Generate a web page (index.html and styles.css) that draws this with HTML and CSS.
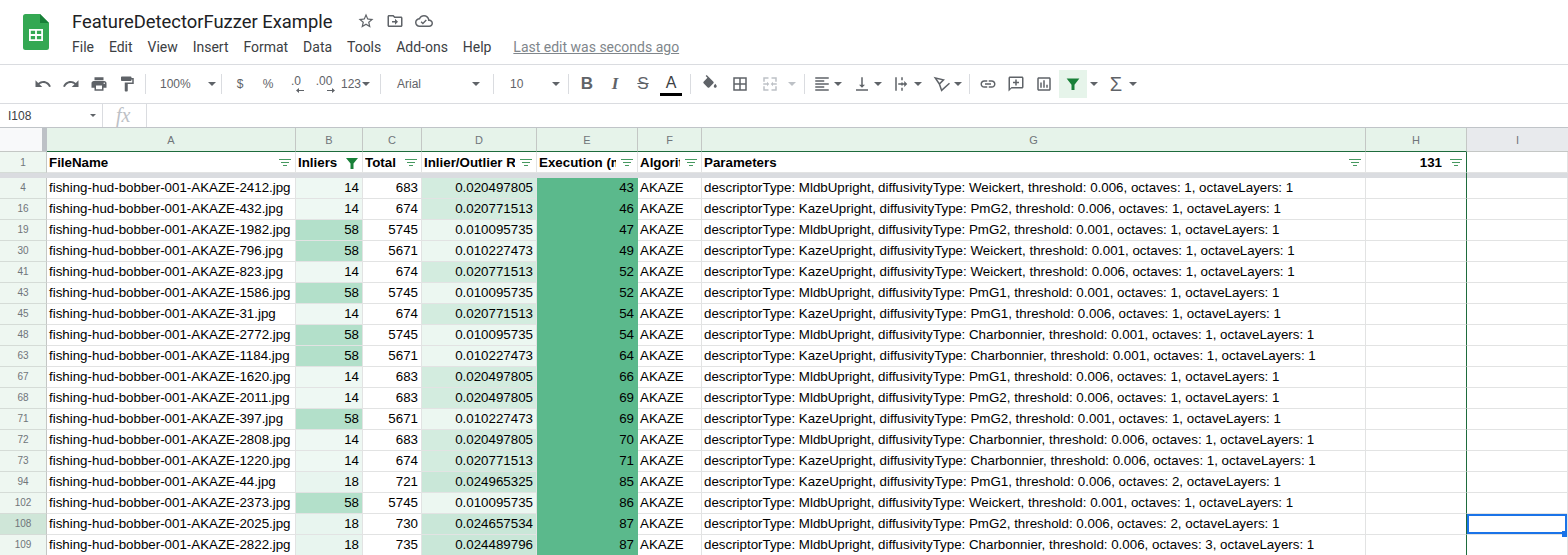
FILE: index.html
```html
<!DOCTYPE html>
<html lang="en">
<head>
    <meta charset="UTF-8">
    <title>FeatureDetectorFuzzer Example</title>
    <link rel="stylesheet" href="styles.css">
</head>
<body>
<header class="top">
    <svg class="logo" viewBox="0 0 26 36" width="26" height="36">
        <path fill="#34a853" d="M2.500 0H17l9 9v24.500a2.500 2.500 0 0 1-2.500 2.500h-21A2.500 2.500 0 0 1 0 33.500v-31A2.500 2.500 0 0 1 2.500 0z"/>
        <path fill="#188038" d="M17 0l9 9h-9z"/>
        <path fill="#fff" d="M6 15h14v12H6zm1.800 1.800v3.300h4.300v-3.300zm6.100 0v3.300h4.300v-3.300zm-6.100 5.100v3.300h4.300v-3.300zm6.100 0v3.300h4.300v-3.300z" fill-rule="evenodd"/>
    </svg>
    <div class="top-main">
        <div class="title-row">
            <span class="doc-title">FeatureDetectorFuzzer Example</span>
            <svg class="title-icon" viewBox="0 0 24 24"><path d="M22 9.240l-7.190-.62L12 2 9.190 8.630 2 9.240l5.460 4.730L5.820 21 12 17.270 18.180 21l-1.630-7.030L22 9.240zM12 15.400l-3.760 2.270 1-4.280-3.320-2.880 4.380-.38L12 6.100l1.710 4.040 4.380.38-3.320 2.880 1 4.280L12 15.400z"/></svg>
            <svg class="title-icon" viewBox="0 0 24 24"><path d="M20 6h-8l-2-2H4c-1.100 0-2 .9-2 2v12c0 1.100.9 2 2 2h16c1.100 0 2-.9 2-2V8c0-1.100-.9-2-2-2zm0 12H4V6h5.170l2 2H20v10zm-8-1v-3H8v-2h4V9l4 4-4 4z"/></svg>
            <svg class="title-icon" viewBox="0 0 24 24"><path d="M19.350 10.040C18.670 6.590 15.640 4 12 4 9.110 4 6.600 5.640 5.350 8.040 2.340 8.360 0 10.910 0 14c0 3.310 2.690 6 6 6h13c2.760 0 5-2.240 5-5 0-2.640-2.050-4.780-4.650-4.960zM19 18H6c-2.210 0-4-1.790-4-4s1.790-4 4-4h.71C7.370 7.690 9.480 6 12 6c3.040 0 5.500 2.460 5.500 5.500v.5H19c1.660 0 3 1.340 3 3s-1.340 3-3 3z"/><path d="M10.500 16.500l-3-3 1.300-1.300 1.700 1.700 3.900-3.900 1.300 1.300z"/></svg>
        </div>
        <nav class="menu">
            <span>File</span><span>Edit</span><span>View</span><span>Insert</span><span>Format</span><span>Data</span><span>Tools</span><span>Add-ons</span><span>Help</span>
            <a class="last-edit">Last edit was seconds ago</a>
        </nav>
    </div>
</header>

<div class="toolbar">
    <span class="tb"><svg viewBox="0 0 24 24"><path d="M12.500 8c-2.650 0-5.050.99-6.900 2.600L2 7v9h9l-3.620-3.620c1.390-1.160 3.160-1.880 5.120-1.880 3.540 0 6.550 2.310 7.600 5.500l2.370-.78C21.080 11.030 17.150 8 12.500 8z"/></svg></span>
    <span class="tb"><svg viewBox="0 0 24 24"><path d="M18.400 10.600C16.550 8.990 14.150 8 11.500 8c-4.650 0-8.580 3.030-9.960 7.220L3.900 16c1.050-3.190 4.050-5.500 7.600-5.500 1.950 0 3.730.72 5.120 1.880L13 16h9V7l-3.600 3.600z"/></svg></span>
    <span class="tb"><svg viewBox="0 0 24 24"><path d="M19 8H5c-1.660 0-3 1.340-3 3v6h4v4h12v-4h4v-6c0-1.660-1.340-3-3-3zm-3 11H8v-5h8v5zm3-7c-.55 0-1-.45-1-1s.45-1 1-1 1 .45 1 1-.45 1-1 1zm-1-9H6v4h12V3z"/></svg></span>
    <span class="tb"><svg viewBox="0 0 24 24"><path d="M18 4V3c0-.55-.45-1-1-1H5c-.55 0-1 .45-1 1v4c0 .55.45 1 1 1h12c.55 0 1-.45 1-1V6h1v4H9v11c0 .55.45 1 1 1h2c.55 0 1-.45 1-1v-9h8V4h-3z"/></svg></span>
    <i class="sep"></i>
    <span class="select zoom-select"><span>100%</span><b class="caret"></b></span>
    <i class="sep"></i>
    <span class="tb txt">$</span>
    <span class="tb txt">%</span>
    <span class="tb txt dec"><span>.0</span><svg class="dec-arrow" viewBox="0 0 8 5"><path d="M0 2.500L3 0v2h5v1H3v2z"/></svg></span>
    <span class="tb txt dec"><span>.00</span><svg class="dec-arrow dec-right" viewBox="0 0 8 5"><path d="M8 2.500L5 0v2H0v1h5v2z"/></svg></span>
    <span class="tb-num">123<b class="caret"></b></span>
    <i class="sep"></i>
    <span class="select font-select"><span>Arial</span><b class="caret"></b></span>
    <i class="sep"></i>
    <span class="select size-select"><span>10</span><b class="caret"></b></span>
    <i class="sep"></i>
    <span class="tb fmt fmt-b">B</span>
    <span class="tb fmt fmt-i">I</span>
    <span class="tb fmt fmt-s">S</span>
    <span class="tb fmt fmt-a">A</span>
    <i class="sep sep-wide"></i>
    <span class="tb"><svg viewBox="0 0 24 24"><path d="M16.560 8.940L7.620 0 6.210 1.410l2.380 2.380-5.150 5.150c-.59.59-.59 1.540 0 2.120l5.500 5.500c.29.29.68.44 1.060.44s.77-.15 1.060-.44l5.500-5.500c.59-.58.59-1.530 0-2.120zM19 11.500s-2 2.170-2 3.500c0 1.100.9 2 2 2s2-.9 2-2c0-1.330-2-3.500-2-3.500z"/></svg></span>
    <span class="tb tb-gap"><svg viewBox="0 0 24 24"><path d="M3 3v18h18V3H3zm8 16H5v-6h6v6zm0-8H5V5h6v6zm8 8h-6v-6h6v6zm0-8h-6V5h6v6z"/></svg></span>
    <span class="tb tb-gap disabled"><svg viewBox="0 0 24 24"><path d="M3 3h7v2H5v4H3zm11 0h7v6h-2V5h-5zM3 15h2v4h5v2H3zm16 0h2v6h-7v-2h5zM3 11h5V9l3 3-3 3v-2H3zm18 0h-5V9l-3 3 3 3v-2h5z"/></svg></span>
    <b class="caret caret-off"></b>
    <i class="sep sep-merge"></i>
    <span class="tb-drop"><svg viewBox="0 0 24 24"><path d="M15 15H3v2h12v-2zm0-8H3v2h12V7zM3 13h18v-2H3v2zm0 8h18v-2H3v2zM3 3v2h18V3H3z"/></svg><b class="caret"></b></span>
    <span class="tb-drop"><svg viewBox="0 0 24 24"><path d="M16 13h-3V3h-2v10H8l4 4 4-4zM4 19v2h16v-2H4z"/></svg><b class="caret"></b></span>
    <span class="tb-drop"><svg viewBox="0 0 24 24"><path d="M3 3h2v18H3zm8 0h2v4h-2zm0 7h2v4h-2zm0 7h2v4h-2zM7 11h8V8l4 4-4 4v-3H7z"/></svg><b class="caret"></b></span>
    <span class="tb-drop"><svg class="rotate-icon" viewBox="0 0 24 24"><path d="M3 4l11 2.500-5.500 5.500zM8.500 12l3 8.500L22 11"/></svg><b class="caret"></b></span>
    <i class="sep sep-tight"></i>
    <span class="tb"><svg viewBox="0 0 24 24"><path d="M3.900 12c0-1.710 1.390-3.100 3.100-3.100h4V7H7c-2.760 0-5 2.240-5 5s2.240 5 5 5h4v-1.900H7c-1.710 0-3.100-1.390-3.100-3.100zM8 13h8v-2H8v2zm9-6h-4v1.900h4c1.710 0 3.100 1.390 3.100 3.100s-1.390 3.100-3.100 3.100h-4V17h4c2.760 0 5-2.240 5-5s-2.240-5-5-5z"/></svg></span>
    <span class="tb"><svg viewBox="0 0 24 24"><path d="M20 2H4c-1.100 0-2 .9-2 2v18l4-4h14c1.100 0 2-.9 2-2V4c0-1.100-.9-2-2-2zm0 14H6l-2 2V4h16v12z"/><path d="M11 6h2v3h3v2h-3v3h-2v-3H8V9h3z"/></svg></span>
    <span class="tb"><svg viewBox="0 0 24 24"><path d="M19 3H5c-1.100 0-2 .9-2 2v14c0 1.100.9 2 2 2h14c1.100 0 2-.9 2-2V5c0-1.100-.9-2-2-2zm0 16H5V5h14v14zM7 10h2v7H7zm4-3h2v10h-2zm4 6h2v4h-2z"/></svg></span>
    <span class="tb filter-on"><svg viewBox="0 0 24 24"><path d="M3.500 4.500h17L14 13v7h-4v-7z"/></svg></span>
    <b class="caret caret-filter"></b>
    <span class="tb sigma">&#931;</span>
    <b class="caret caret-sigma"></b>
</div>

<div class="formula-bar">
    <span class="name-box">I108<b class="caret caret-small"></b></span>
    <span class="fx">fx</span>
</div>

<table class="sheet">
    <colgroup>
        <col class="c-row"><col class="c-a"><col class="c-b"><col class="c-c"><col class="c-d"><col class="c-e"><col class="c-f"><col class="c-g"><col class="c-h"><col class="c-i">
    </colgroup>
    <thead>
        <tr class="letters">
            <th class="corner"></th><th>A</th><th>B</th><th>C</th><th>D</th><th>E</th><th>F</th><th>G</th><th>H</th><th class="off">I</th>
        </tr>
    </thead>
    <tbody>
        <tr class="head-row">
            <td class="rh">1</td>
            <td><div class="hc"><span>FileName</span><svg class="fl" viewBox="0 0 12 8"><path d="M0 0h12v1H0zM2 3h8v1H2zM4 6h4v1H4z"/></svg></div></td>
            <td><div class="hc"><span>Inliers</span><svg class="fl fl-on" viewBox="0 0 12 12"><path d="M0 1h12L7.500 6.500V12h-3V6.500z"/></svg></div></td>
            <td><div class="hc"><span>Total</span><svg class="fl" viewBox="0 0 12 8"><path d="M0 0h12v1H0zM2 3h8v1H2zM4 6h4v1H4z"/></svg></div></td>
            <td><div class="hc"><span>Inlier/Outlier Ratio</span><svg class="fl" viewBox="0 0 12 8"><path d="M0 0h12v1H0zM2 3h8v1H2zM4 6h4v1H4z"/></svg></div></td>
            <td><div class="hc"><span>Execution (ms)</span><svg class="fl" viewBox="0 0 12 8"><path d="M0 0h12v1H0zM2 3h8v1H2zM4 6h4v1H4z"/></svg></div></td>
            <td><div class="hc"><span>Algorithm</span><svg class="fl" viewBox="0 0 12 8"><path d="M0 0h12v1H0zM2 3h8v1H2zM4 6h4v1H4z"/></svg></div></td>
            <td><div class="hc"><span>Parameters</span><svg class="fl" viewBox="0 0 12 8"><path d="M0 0h12v1H0zM2 3h8v1H2zM4 6h4v1H4z"/></svg></div></td>
            <td class="last"><div class="hc hc-num"><span>131</span><svg class="fl" viewBox="0 0 12 8"><path d="M0 0h12v1H0zM2 3h8v1H2zM4 6h4v1H4z"/></svg></div></td>
            <td></td>
        </tr>
        <tr class="band"><td></td><td></td><td></td><td></td><td></td><td></td><td></td><td></td><td class="last"></td><td></td></tr>
        <tr><td class="rh">4</td><td>fishing-hud-bobber-001-AKAZE-2412.jpg</td><td class="n in-14">14</td><td class="n">683</td><td class="n r-mid">0.020497805</td><td class="n ex">43</td><td>AKAZE</td><td>descriptorType: MldbUpright, diffusivityType: Weickert, threshold: 0.006, octaves: 1, octaveLayers: 1</td><td class="last"></td><td></td></tr>
        <tr><td class="rh">16</td><td>fishing-hud-bobber-001-AKAZE-432.jpg</td><td class="n in-14">14</td><td class="n">674</td><td class="n r-mid">0.020771513</td><td class="n ex">46</td><td>AKAZE</td><td>descriptorType: KazeUpright, diffusivityType: PmG2, threshold: 0.006, octaves: 1, octaveLayers: 1</td><td class="last"></td><td></td></tr>
        <tr><td class="rh">19</td><td>fishing-hud-bobber-001-AKAZE-1982.jpg</td><td class="n in-58">58</td><td class="n">5745</td><td class="n r-low">0.010095735</td><td class="n ex">47</td><td>AKAZE</td><td>descriptorType: MldbUpright, diffusivityType: PmG2, threshold: 0.001, octaves: 1, octaveLayers: 1</td><td class="last"></td><td></td></tr>
        <tr><td class="rh">30</td><td>fishing-hud-bobber-001-AKAZE-796.jpg</td><td class="n in-58">58</td><td class="n">5671</td><td class="n r-low">0.010227473</td><td class="n ex">49</td><td>AKAZE</td><td>descriptorType: KazeUpright, diffusivityType: Weickert, threshold: 0.001, octaves: 1, octaveLayers: 1</td><td class="last"></td><td></td></tr>
        <tr><td class="rh">41</td><td>fishing-hud-bobber-001-AKAZE-823.jpg</td><td class="n in-14">14</td><td class="n">674</td><td class="n r-mid">0.020771513</td><td class="n ex">52</td><td>AKAZE</td><td>descriptorType: KazeUpright, diffusivityType: Weickert, threshold: 0.006, octaves: 1, octaveLayers: 1</td><td class="last"></td><td></td></tr>
        <tr><td class="rh">43</td><td>fishing-hud-bobber-001-AKAZE-1586.jpg</td><td class="n in-58">58</td><td class="n">5745</td><td class="n r-low">0.010095735</td><td class="n ex">52</td><td>AKAZE</td><td>descriptorType: MldbUpright, diffusivityType: PmG1, threshold: 0.001, octaves: 1, octaveLayers: 1</td><td class="last"></td><td></td></tr>
        <tr><td class="rh">45</td><td>fishing-hud-bobber-001-AKAZE-31.jpg</td><td class="n in-14">14</td><td class="n">674</td><td class="n r-mid">0.020771513</td><td class="n ex">54</td><td>AKAZE</td><td>descriptorType: KazeUpright, diffusivityType: PmG1, threshold: 0.006, octaves: 1, octaveLayers: 1</td><td class="last"></td><td></td></tr>
        <tr><td class="rh">48</td><td>fishing-hud-bobber-001-AKAZE-2772.jpg</td><td class="n in-58">58</td><td class="n">5745</td><td class="n r-low">0.010095735</td><td class="n ex">54</td><td>AKAZE</td><td>descriptorType: MldbUpright, diffusivityType: Charbonnier, threshold: 0.001, octaves: 1, octaveLayers: 1</td><td class="last"></td><td></td></tr>
        <tr><td class="rh">63</td><td>fishing-hud-bobber-001-AKAZE-1184.jpg</td><td class="n in-58">58</td><td class="n">5671</td><td class="n r-low">0.010227473</td><td class="n ex">64</td><td>AKAZE</td><td>descriptorType: KazeUpright, diffusivityType: Charbonnier, threshold: 0.001, octaves: 1, octaveLayers: 1</td><td class="last"></td><td></td></tr>
        <tr><td class="rh">67</td><td>fishing-hud-bobber-001-AKAZE-1620.jpg</td><td class="n in-14">14</td><td class="n">683</td><td class="n r-mid">0.020497805</td><td class="n ex">66</td><td>AKAZE</td><td>descriptorType: MldbUpright, diffusivityType: PmG1, threshold: 0.006, octaves: 1, octaveLayers: 1</td><td class="last"></td><td></td></tr>
        <tr><td class="rh">68</td><td>fishing-hud-bobber-001-AKAZE-2011.jpg</td><td class="n in-14">14</td><td class="n">683</td><td class="n r-mid">0.020497805</td><td class="n ex">69</td><td>AKAZE</td><td>descriptorType: MldbUpright, diffusivityType: PmG2, threshold: 0.006, octaves: 1, octaveLayers: 1</td><td class="last"></td><td></td></tr>
        <tr><td class="rh">71</td><td>fishing-hud-bobber-001-AKAZE-397.jpg</td><td class="n in-58">58</td><td class="n">5671</td><td class="n r-low">0.010227473</td><td class="n ex">69</td><td>AKAZE</td><td>descriptorType: KazeUpright, diffusivityType: PmG2, threshold: 0.001, octaves: 1, octaveLayers: 1</td><td class="last"></td><td></td></tr>
        <tr><td class="rh">72</td><td>fishing-hud-bobber-001-AKAZE-2808.jpg</td><td class="n in-14">14</td><td class="n">683</td><td class="n r-mid">0.020497805</td><td class="n ex">70</td><td>AKAZE</td><td>descriptorType: MldbUpright, diffusivityType: Charbonnier, threshold: 0.006, octaves: 1, octaveLayers: 1</td><td class="last"></td><td></td></tr>
        <tr><td class="rh">73</td><td>fishing-hud-bobber-001-AKAZE-1220.jpg</td><td class="n in-14">14</td><td class="n">674</td><td class="n r-mid">0.020771513</td><td class="n ex">71</td><td>AKAZE</td><td>descriptorType: KazeUpright, diffusivityType: Charbonnier, threshold: 0.006, octaves: 1, octaveLayers: 1</td><td class="last"></td><td></td></tr>
        <tr><td class="rh">94</td><td>fishing-hud-bobber-001-AKAZE-44.jpg</td><td class="n in-18">18</td><td class="n">721</td><td class="n r-high">0.024965325</td><td class="n ex">85</td><td>AKAZE</td><td>descriptorType: KazeUpright, diffusivityType: PmG1, threshold: 0.006, octaves: 2, octaveLayers: 1</td><td class="last"></td><td></td></tr>
        <tr><td class="rh">102</td><td>fishing-hud-bobber-001-AKAZE-2373.jpg</td><td class="n in-58">58</td><td class="n">5745</td><td class="n r-low">0.010095735</td><td class="n ex">86</td><td>AKAZE</td><td>descriptorType: MldbUpright, diffusivityType: Weickert, threshold: 0.001, octaves: 1, octaveLayers: 1</td><td class="last"></td><td></td></tr>
        <tr><td class="rh rh-active">108</td><td>fishing-hud-bobber-001-AKAZE-2025.jpg</td><td class="n in-18">18</td><td class="n">730</td><td class="n r-high">0.024657534</td><td class="n ex">87</td><td>AKAZE</td><td>descriptorType: MldbUpright, diffusivityType: PmG2, threshold: 0.006, octaves: 2, octaveLayers: 1</td><td class="last"></td><td class="selected"></td></tr>
        <tr><td class="rh">109</td><td>fishing-hud-bobber-001-AKAZE-2822.jpg</td><td class="n in-18">18</td><td class="n">735</td><td class="n r-high">0.024489796</td><td class="n ex">87</td><td>AKAZE</td><td>descriptorType: MldbUpright, diffusivityType: Charbonnier, threshold: 0.006, octaves: 3, octaveLayers: 1</td><td class="last"></td><td></td></tr>
    </tbody>
</table>
</body>
</html>
```

FILE: styles.css
```css
html, body {
    margin: 0;
    height: 555px;
    overflow: hidden;
    background: #fff;
    font-family: "Liberation Sans", Arial, sans-serif;
    color: #000;
}

/* title + menu */
.top {
    display: flex;
    height: 65px;
    box-sizing: border-box;
    padding: 14px 0 0 23px;
    border-bottom: 1px solid #dadce0;
}
.logo {
    flex: none;
}
.top-main {
    margin-left: 23px;
    margin-top: -5px;
}
.title-row {
    display: flex;
    align-items: center;
    height: 24px;
}
.doc-title {
    font-family: Roboto, sans-serif;
    font-size: 18.4px;
    color: #202124;
    width: 285px;
}
.title-icon {
    width: 18px;
    height: 18px;
    fill: #5f6368;
    margin-right: 11px;
}
.menu {
    display: flex;
    align-items: center;
    height: 20px;
    margin-top: 4px;
    font-family: Roboto, sans-serif;
    font-size: 14px;
    color: #3c4043;
    gap: 14.9px;
}
.last-edit {
    margin-left: 7px;
    color: #80868b;
    text-decoration: underline;
}

/* toolbar */
.toolbar {
    display: flex;
    align-items: center;
    height: 38px;
    padding-left: 29px;
    border-bottom: 1px solid #dadce0;
    color: #5f6368;
    font-size: 12px;
}
.tb {
    flex: none;
    width: 28px;
    height: 28px;
    display: flex;
    align-items: center;
    justify-content: center;
}
.tb-gap {
    margin-left: 2px;
}
.tb svg, .tb-drop svg {
    width: 18px;
    height: 18px;
    fill: #5f6368;
}
.tb-drop .rotate-icon {
    fill: none;
    stroke: #5f6368;
    stroke-width: 2;
}
.sep {
    flex: none;
    width: 1px;
    height: 20px;
    margin: 0 4px;
    background: #dadce0;
}
.sep-wide {
    margin: 0 5px;
}
.sep-merge {
    margin: 0 7px 0 8px;
}
.sep-tight {
    margin: 0 4px 0 -3px;
}
.caret {
    display: inline-block;
    flex: none;
    width: 0;
    height: 0;
    border-left: 4px solid transparent;
    border-right: 4px solid transparent;
    border-top: 4px solid #5f6368;
}
.select {
    flex: none;
    display: flex;
    align-items: center;
    justify-content: space-between;
    height: 28px;
    box-sizing: border-box;
}
.zoom-select {
    width: 65px;
    padding: 0 1px 0 8px;
    margin-left: 2px;
}
.font-select {
    width: 104px;
    padding: 0 9px 0 12px;
}
.size-select {
    width: 66px;
    padding: 0 4px 0 12px;
}
.txt {
    font-size: 12px;
    color: #5f6368;
}
.dec {
    flex-direction: column;
    line-height: 13px;
}
.tb .dec-arrow {
    width: 8px;
    height: 5px;
    margin-left: 8px;
}
.tb .dec-right {
    margin-left: 14px;
}
.tb-num {
    flex: none;
    display: flex;
    align-items: center;
    gap: 1px;
    width: 35px;
    margin-left: 3px;
}
.fmt {
    font-size: 17px;
    color: #5f6368;
}
.fmt-b {
    font-weight: bold;
}
.fmt-i {
    font-style: italic;
    font-weight: bold;
    font-family: "Liberation Serif", serif;
}
.fmt-s {
    text-decoration: line-through;
}
.fmt-a {
    color: #3c4043;
    height: 24px;
    box-sizing: border-box;
    border-bottom: 3px solid #000;
    width: 22px;
    margin: 0 3px;
    font-size: 16px;
}
.disabled svg {
    fill: #bdc1c6;
}
.caret-off {
    border-top-color: #bdc1c6;
    margin-left: 4px;
}
.tb-drop {
    flex: none;
    width: 40px;
    display: flex;
    align-items: center;
    padding-left: 1px;
    box-sizing: border-box;
    gap: 3px;
}
.filter-on {
    background: #e6f4ea;
    margin-left: 1px;
}
.filter-on svg {
    fill: #188038;
}
.caret-filter {
    margin: 0 4px 0 3px;
}
.sigma {
    font-size: 20px;
    color: #5f6368;
}
.caret-sigma {
    margin-left: -1px;
}

/* formula bar */
.formula-bar {
    display: flex;
    align-items: center;
    height: 23px;
    border-bottom: 1px solid #c0c4c8;
    color: #5f6368;
}
.name-box {
    display: flex;
    align-items: center;
    justify-content: space-between;
    box-sizing: border-box;
    width: 103px;
    height: 23px;
    padding: 0 6px 0 8px;
    font-size: 12px;
    color: #3c4043;
    border-right: 1px solid #dadce0;
}
.caret-small {
    border-left-width: 3px;
    border-right-width: 3px;
    border-top-width: 3px;
}
.fx {
    width: 44px;
    box-sizing: border-box;
    height: 23px;
    line-height: 23px;
    padding-left: 13px;
    font-family: "Liberation Serif", serif;
    font-style: italic;
    font-size: 20px;
    color: #bdc1c6;
    border-right: 1px solid #dadce0;
}

/* grid */
.sheet {
    border-collapse: separate;
    border-spacing: 0;
    table-layout: fixed;
    width: 1568px;
    font-size: 10pt;
}
.c-row { width: 47px; }
.c-a { width: 249px; }
.c-b { width: 67px; }
.c-c { width: 59px; }
.c-d { width: 115px; }
.c-e { width: 101px; }
.c-f { width: 64px; }
.c-g { width: 664px; }
.c-h { width: 101px; }
.c-i { width: 101px; }

.sheet th, .sheet td {
    padding: 0;
    box-sizing: border-box;
    overflow: hidden;
    white-space: nowrap;
}
.letters th {
    height: 24px;
    font-size: 11px;
    font-weight: normal;
    color: #70757a;
    background: #e6f3ea;
    border-right: 1px solid #c4c7c5;
    border-bottom: 1px solid #1e6b3c;
}
.letters .corner {
    background: #f8f9fa;
    border-right: 5px solid #bdc1c6;
    border-bottom: 1px solid #c4c7c5;
}
.letters .off {
    background: #e8eaed;
    border-right: 0;
    border-bottom-color: #c4c7c5;
}
.sheet td {
    height: 21px;
    padding: 2px 3px 0 2px;
    line-height: 15px;
    vertical-align: top;
    border-right: 1px solid #e2e3e3;
    border-bottom: 1px solid #e2e3e3;
}
.sheet .rh {
    padding: 2px 0 0;
    text-align: center;
    font-size: 10px;
    font-weight: normal;
    color: #70757a;
    background: #eef7f1;
    border-right-color: #c4c7c5;
    border-bottom-color: #d5dcd7;
}
.sheet .rh-active {
    background: #cfe6d8;
}
.sheet .last {
    border-right: 1px solid #1e6b3c;
}
.sheet .head-row td {
    font-weight: bold;
    padding-top: 3px;
}
.sheet .head-row .rh {
    font-weight: normal;
}
.hc {
    display: flex;
    align-items: center;
    gap: 5px;
    margin-right: 1px;
}
.hc span {
    flex: 1;
    min-width: 0;
    overflow: hidden;
}
.hc-num span {
    text-align: right;
    margin-right: 3px;
}
.fl {
    flex: none;
    width: 12px;
    height: 8px;
    fill: #188038;
    fill-opacity: .8;
}
.fl-on {
    height: 12px;
    fill-opacity: 1;
}
.sheet .band td {
    height: 5px;
    padding: 0;
    background: #dadce0;
    border-bottom: 0;
    border-right-color: #dadce0;
}
.sheet .band .last {
    border-right-color: #1e6b3c;
}
.sheet .n {
    text-align: right;
}
.in-14 { background: #eef8f3; }
.in-18 { background: #e8f5ef; }
.in-58 { background: #b3e0ca; }
.r-low { background: #ecf7f1; }
.r-mid { background: #d3ecdf; }
.r-high { background: #c9e7d8; }
.sheet .ex {
    background: #5bb98c;
    border-color: #5bb98c;
}

/* active cell */
.sheet td.selected {
    position: relative;
    overflow: visible;
    box-shadow: inset 0 0 0 2px #1a73e8;
}
.selected::after {
    content: "";
    position: absolute;
    right: 0;
    bottom: -3px;
    width: 5px;
    height: 6px;
    background: #1a73e8;
}
```
